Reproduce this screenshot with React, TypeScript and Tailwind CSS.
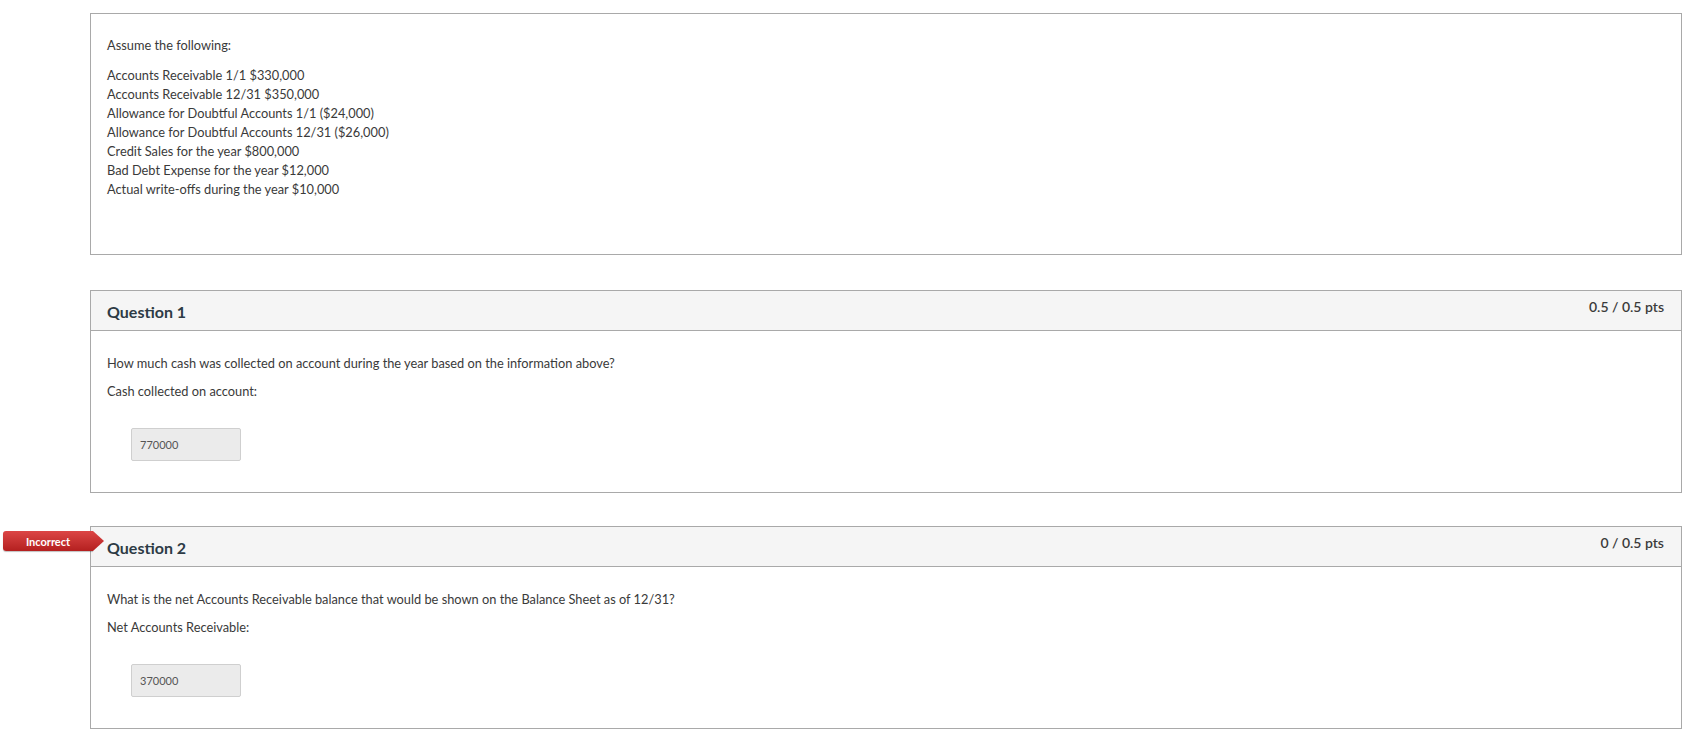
import React from 'react';

const font = { fontFamily: 'Lato, "Open Sans", sans-serif' };

const givens = [
  'Accounts Receivable 1/1 $330,000',
  'Accounts Receivable 12/31 $350,000',
  'Allowance for Doubtful Accounts 1/1 ($24,000)',
  'Allowance for Doubtful Accounts 12/31 ($26,000)',
  'Credit Sales for the year $800,000',
  'Bad Debt Expense for the year $12,000',
  'Actual write-offs during the year $10,000',
];

type Question = {
  name: string;
  points: string;
  text: string;
  label: string;
  answer: string;
  incorrect?: boolean;
};

const questions: Question[] = [
  {
    name: 'Question 1',
    points: '0.5 / 0.5 pts',
    text: 'How much cash was collected on account during the year based on the information above?',
    label: 'Cash collected on account:',
    answer: '770000',
  },
  {
    name: 'Question 2',
    points: '0 / 0.5 pts',
    text: 'What is the net Accounts Receivable balance that would be shown on the Balance Sheet as of 12/31?',
    label: 'Net Accounts Receivable:',
    answer: '370000',
    incorrect: true,
  },
];

function IncorrectBadge() {
  return (
    <div className="absolute left-[-88px] top-[4px] flex h-[20px] items-stretch">
      <div className="flex w-[90px] items-center justify-center rounded-l-[3px] bg-gradient-to-b from-[#dc4545] to-[#b41f1f] text-[11px] font-bold leading-none text-white shadow-[0_1px_1px_rgba(0,0,0,0.25)]">
        Incorrect
      </div>
      <svg width="11" height="20" viewBox="0 0 11 20" className="block">
        <defs>
          <linearGradient id="arrowGrad" x1="0" y1="0" x2="0" y2="1">
            <stop offset="0" stopColor="#dc4545" />
            <stop offset="1" stopColor="#b41f1f" />
          </linearGradient>
        </defs>
        <polygon points="0,0 11,10 0,20" fill="url(#arrowGrad)" />
      </svg>
    </div>
  );
}

function QuestionCard({ q }: { q: Question }) {
  return (
    <div className="relative w-[1592px] border border-[#a9a9a9] bg-white">
      {q.incorrect && <IncorrectBadge />}
      <div className="flex h-[40px] justify-between border-b border-[#a9a9a9] bg-[#f5f5f5] pl-[16px] pr-[17px]">
        <div className="pt-[11px] text-[16px] font-bold leading-[20px] text-[#2d3b45]">
          {q.name}
        </div>
        <div className="pt-[7px] text-[14px] font-semibold leading-[18px] text-[#3b3b3b]">
          {q.points}
        </div>
      </div>
      <div className="pl-[16px] pt-[23px] pb-[31px] text-[12.8px] leading-[19.3px] text-[#3a3a3a]">
        <p className="mb-[8.6px]">{q.text}</p>
        <p>{q.label}</p>
        <div className="mt-[27px] ml-[24px] flex h-[33px] w-[110px] items-center rounded-[2px] border border-[#cfcfcf] bg-[#ebebeb] pl-[8px] text-[11px] text-[#555]">
          {q.answer}
        </div>
      </div>
    </div>
  );
}

export default function App() {
  return (
    <div className="min-h-[735px] w-[1687px] bg-white" style={font}>
      <div className="ml-[90px] flex flex-col pt-[13px]">
        <div className="h-[242px] w-[1592px] border border-[#a9a9a9] pl-[16px] pt-[22px] text-[12.8px] leading-[19px] text-[#3a3a3a]">
          <p className="mb-[11px]">Assume the following:</p>
          {givens.map((line) => (
            <p key={line}>{line}</p>
          ))}
        </div>
        <div className="mt-[35px] flex flex-col gap-[33px]">
          {questions.map((q) => (
            <QuestionCard key={q.name} q={q} />
          ))}
        </div>
      </div>
    </div>
  );
}
